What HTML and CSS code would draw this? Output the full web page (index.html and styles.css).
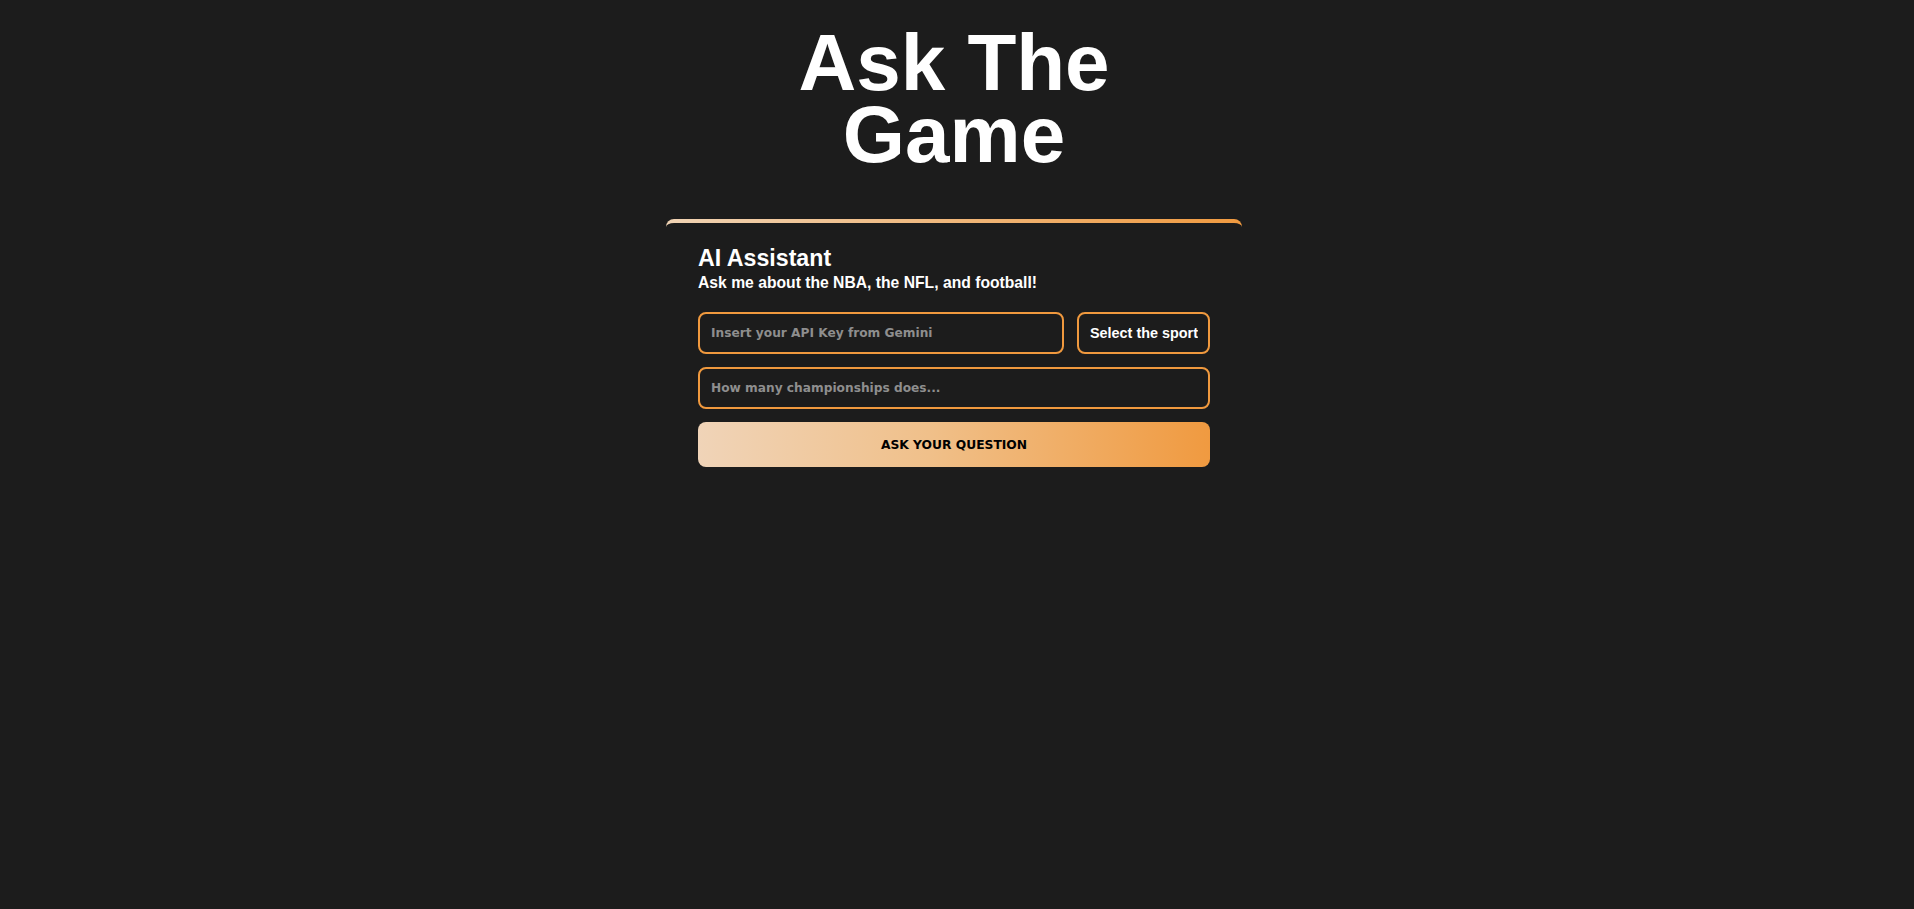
FILE: index.html
```html
<!DOCTYPE html>
<html lang="en">
<head>
<meta charset="utf-8">
<title>Ask The Game</title>
<link rel="stylesheet" href="styles.css">
</head>
<body>
<main class="page">
  <h1 class="title">Ask The Game</h1>
  <section class="card">
    <h2 class="card-title">AI Assistant</h2>
    <p class="card-subtitle">Ask me about the NBA, the NFL, and football!</p>
    <form class="form">
      <div class="row">
        <input class="field field-key" type="password" placeholder="Insert your API Key from Gemini">
        <select class="sport">
          <option>Select the sport</option>
          <option>NBA</option>
          <option>NFL</option>
          <option>Football</option>
        </select>
      </div>
      <input class="field" type="text" placeholder="How many championships does...">
      <button class="ask" type="button">ASK YOUR QUESTION</button>
    </form>
  </section>
</main>
</body>
</html>
```

FILE: styles.css
```css
* { box-sizing: border-box; }

html, body {
  margin: 0;
  background: #1c1c1c;
}

body {
  font-family: "Liberation Sans", Arial, sans-serif;
  color: #ffffff;
}

.page {
  display: flex;
  flex-direction: column;
  align-items: center;
  padding: 27px 6px 0 0;
}

.title {
  margin: 0;
  max-width: 400px;
  font-size: 80px;
  line-height: 72px;
  font-weight: 700;
  text-align: center;
  color: #ffffff;
}

.card {
  width: 576px;
  margin-top: 48px;
  padding: 22px 32px 32px;
  border-top: 4px solid transparent;
  border-radius: 8px 8px 0 0;
  background:
    linear-gradient(#1c1c1c, #1c1c1c) padding-box,
    linear-gradient(90deg, #f0d3b4 0%, #f09a40 100%) border-box;
}

.card-title {
  margin: 0;
  font-size: 23.2px;
  font-weight: 700;
  line-height: normal;
}

.card-subtitle {
  margin: 2px 0 0;
  font-size: 15.7px;
  font-weight: 700;
  line-height: normal;
}

.form {
  display: flex;
  flex-direction: column;
  gap: 13px;
  margin-top: 20px;
}

.row {
  display: flex;
  gap: 13px;
}

.field {
  flex: none;
  min-width: 0;
  width: 100%;
  height: 42px;
  padding: 0 11px;
  border: 2px solid #f0993e;
  border-radius: 8px;
  background: transparent;
  color: #ffffff;
  font-family: "DejaVu Sans", Verdana, sans-serif;
  font-size: 12.2px;
  font-weight: 700;
  outline: none;
}

.field-key {
  flex: 1 1 auto;
  width: auto;
}

.field::placeholder {
  color: #8e8e8e;
  opacity: 1;
}

.sport {
  flex: none;
  width: 133px;
  height: 42px;
  padding: 0 10px 0 11px;
  border: 2px solid #f0993e;
  border-radius: 8px;
  background: transparent;
  color: #ffffff;
  font-family: "Liberation Sans", Arial, sans-serif;
  font-size: 14.4px;
  font-weight: 700;
  -webkit-appearance: none;
  appearance: none;
  outline: none;
}

.sport option {
  background: #1c1c1c;
  color: #ffffff;
}

.ask {
  height: 45px;
  border: none;
  border-radius: 8px;
  background: linear-gradient(90deg, #f0d4b8 0%, #f0c08a 45%, #f09a40 100%);
  color: #000000;
  font-family: "DejaVu Sans", Verdana, sans-serif;
  font-size: 12.3px;
  font-weight: 700;
  cursor: pointer;
}
```
